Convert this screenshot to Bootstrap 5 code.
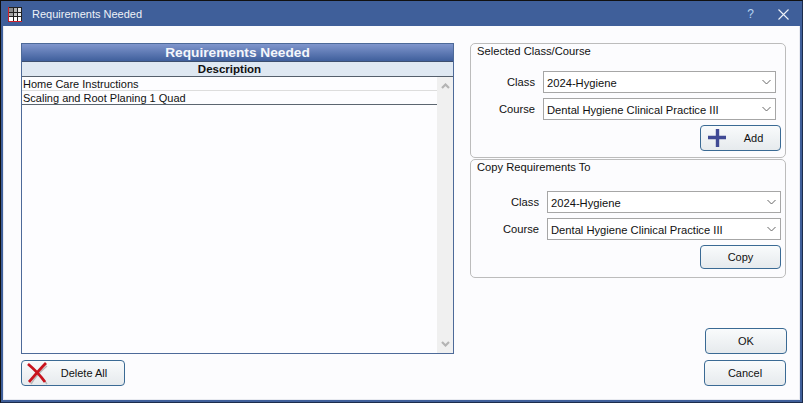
<!DOCTYPE html>
<html lang="en">
<head>
    <meta charset="UTF-8">
    <title>Requirements Needed</title>
    <link href="https://cdn.jsdelivr.net/npm/bootstrap@5.3.3/dist/css/bootstrap.min.css" rel="stylesheet">
    <style>
        html, body { margin: 0; width: 803px; height: 403px; overflow: hidden; background: #fcfcfe; }
        body, .btn, .form-select { font-family: "Liberation Sans", Arial, sans-serif; font-size: 11px; color: #111; }
        .dlg-window { width: 803px; height: 403px; display: flex; flex-direction: column; background: #3f5f9a; border: 1px solid #111; border-bottom-color: #1c2c4c; border-right-color: #1c2c4c; }
        .dlg-title { height: 25px; flex: none; color: #eef2f8; padding: 1px 0 0 7px; }
        .dlg-title .ttl { margin-left: 10px; }
        .dlg-title .help { margin-left: auto; margin-right: 24px; font-size: 12px; color: #b6d6f2; }
        .dlg-title .close-x { margin-right: 13px; }
        .dlg-body { flex: 1; margin: 0 2px 2px 2px; background: #fcfcfe; padding: 17px 14px 14px 18px; box-shadow: inset 1px -1px 0 #e8eaf0, inset -1px 0 0 #e8eaf0; }
        .left-col { width: 433px; flex: none; }
        .right-col { width: 316px; flex: none; margin-left: 16px; }
        .req-panel { height: 311px; border: 1px solid #4d6a99; background: #fdfdff; }
        .req-head { height: 18px; line-height: 18px; text-align: center; color: #f4f6fb; font-weight: 700; font-size: 13.7px; background: linear-gradient(#8096cd, #3f5f9c); border-bottom: 1px solid #3d4f6f; }
        .req-cols { height: 15px; line-height: 14px; text-align: center; font-weight: 700; font-size: 11.5px; background: #dfe8f2; border-bottom: 1px solid #555f6c; padding-right: 16px; }
        .req-list { height: 276px; }
        .req-rows { flex: 1; }
        .req-row { height: 14px; line-height: 14px; padding-left: 1px; border-bottom: 1px solid #ddd; }
        .req-row:last-child { border-bottom-color: #5c6670; }
        .scroll-track { width: 16px; background: #f0f0f0; padding: 6px 0; }
        .group-box { border: 1px solid #bcbcbc; border-radius: 5px; padding: 0 4px 0 6px; }
        .group-one { height: 115px; }
        .group-two { height: 119px; margin-top: 1px; }
        .group-legend { height: 27px; line-height: 15px; font-size: 11.2px; }
        .group-two .group-legend { height: 31px; }
        .form-line { height: 22px; margin-bottom: 5px; }
        .form-line label { flex: 1; text-align: right; padding-right: 8px; font-size: 11.2px; }
        .form-select.win-select { height: 22px; font-size: 11.2px; border: 1px solid #a6a6a6; border-radius: 0; padding: 2px 20px 1px 3px; line-height: 16px; background-color: #fff; background-image: url("data:image/svg+xml,%3csvg xmlns='http://www.w3.org/2000/svg' viewBox='0 0 9 6'%3e%3cpath fill='none' stroke='%23666' d='M.5 1l4 4 4-4'/%3e%3c/svg%3e"); background-size: 9px 6px; background-position: right 4px center; box-shadow: none; }
        .group-one .win-select { width: 233px; margin-right: 5px; flex: none; }
        .group-two .win-select { width: 234px; flex: none; }
        .btn.win-btn { height: 26px; padding: 0; font-size: 11px; color: #111; border: 1px solid #3a6a94; border-radius: 4px; background: linear-gradient(#f9fbfc, #e6eaed); display: flex; align-items: center; justify-content: center; }
        .add-btn { width: 81px; }
        .btn.copy-btn { width: 81px; height: 24px; }
        .del-btn { width: 104px; }
        .del-btn .btn-label { padding-right: 6px; }
        .ok-btn { width: 82px; margin-bottom: 6px; margin-right: -1px; }
        .cancel-btn { width: 82px; }
        .add-btn .btn-icon { margin-left: 6px; }
        .btn-icon { flex: none; }
        .btn-label { flex: 1; text-align: center; }
    </style>
</head>
<body>
    <div class="dlg-window">
        <div class="dlg-title d-flex align-items-center">
            <svg width="14" height="15" viewBox="0 0 14 15">
                <rect width="14" height="15" fill="#222"/>
                <rect x="1" y="1" width="4" height="4" fill="#8a8a8a"/><rect x="6" y="1" width="3" height="4" fill="#b5b5b5"/><rect x="10" y="1" width="3" height="4" fill="#e5e5e5"/>
                <rect x="1" y="6" width="4" height="3" fill="#a5a5a5"/><rect x="6" y="6" width="3" height="3" fill="#c8c8c8"/><rect x="10" y="6" width="3" height="3" fill="#eee"/>
                <rect x="1" y="10" width="4" height="4" fill="#fff"/><rect x="6" y="10" width="3" height="4" fill="#fff"/><rect x="10" y="10" width="3" height="4" fill="#fff"/>
                <path d="M0.5 0V14.5H14" fill="none" stroke="#d0202a"/>
            </svg>
            <span class="ttl">Requirements Needed</span>
            <span class="help">?</span>
            <svg class="close-x" width="11" height="11" viewBox="0 0 11 11"><path d="M.5.5l10 10M10.5.5l-10 10" stroke="#eef2f8" stroke-width="1.1"/></svg>
        </div>
        <div class="dlg-body d-flex">
            <div class="left-col d-flex flex-column justify-content-between">
                <div class="req-panel">
                    <div class="req-head">Requirements Needed</div>
                    <div class="req-cols">Description</div>
                    <div class="req-list d-flex">
                        <div class="req-rows">
                            <div class="req-row">Home Care Instructions</div>
                            <div class="req-row">Scaling and Root Planing 1 Quad</div>
                        </div>
                        <div class="scroll-track d-flex flex-column justify-content-between align-items-center">
                            <svg width="9" height="6" viewBox="0 0 9 6"><path d="M1 5l3.5-3.5L8 5" fill="none" stroke="#b4b4b4" stroke-width="2.2"/></svg>
                            <svg width="9" height="6" viewBox="0 0 9 6"><path d="M1 1l3.5 3.5L8 1" fill="none" stroke="#b4b4b4" stroke-width="2.2"/></svg>
                        </div>
                    </div>
                </div>
                <button class="btn win-btn del-btn" type="button">
                    <svg class="btn-icon ms-1" width="24" height="24" viewBox="0 0 24 24">
                        <path d="M3 4c6 5 12 11 17 18M20 4C14 9 9 14 4 22" fill="none" stroke="#b8b8b8" stroke-width="1.5" transform="translate(1 1)"/>
                        <path d="M2 3c6 5 12 11 17 18M20 2C14 8 9 14 3 21" fill="none" stroke="#c8141e" stroke-width="2.8"/>
                    </svg>
                    <span class="btn-label">Delete All</span>
                </button>
            </div>
            <div class="right-col d-flex flex-column">
                <div class="group-box group-one">
                    <div class="group-legend">Selected Class/Course</div>
                    <div class="form-line d-flex align-items-center">
                        <label>Class</label>
                        <select class="form-select win-select"><option>2024-Hygiene</option></select>
                    </div>
                    <div class="form-line d-flex align-items-center">
                        <label>Course</label>
                        <select class="form-select win-select"><option>Dental Hygiene Clinical Practice III</option></select>
                    </div>
                    <div class="d-flex justify-content-end">
                        <button class="btn win-btn add-btn" type="button">
                            <svg class="btn-icon" width="20" height="20" viewBox="0 0 20 20"><path d="M10.5 1v18M1 9.5h18" stroke="#404a94" stroke-width="3.4"/></svg>
                            <span class="btn-label">Add</span>
                        </button>
                    </div>
                </div>
                <div class="group-box group-two">
                    <div class="group-legend">Copy Requirements To</div>
                    <div class="form-line d-flex align-items-center">
                        <label>Class</label>
                        <select class="form-select win-select"><option>2024-Hygiene</option></select>
                    </div>
                    <div class="form-line d-flex align-items-center">
                        <label>Course</label>
                        <select class="form-select win-select"><option>Dental Hygiene Clinical Practice III</option></select>
                    </div>
                    <div class="d-flex justify-content-end">
                        <button class="btn win-btn copy-btn" type="button">Copy</button>
                    </div>
                </div>
                <div class="mt-auto d-flex flex-column align-items-end">
                    <button class="btn win-btn ok-btn" type="button">OK</button>
                    <button class="btn win-btn cancel-btn" type="button">Cancel</button>
                </div>
            </div>
        </div>
    </div>
    <script src="https://cdn.jsdelivr.net/npm/bootstrap@5.3.3/dist/js/bootstrap.bundle.min.js"></script>
</body>
</html>
